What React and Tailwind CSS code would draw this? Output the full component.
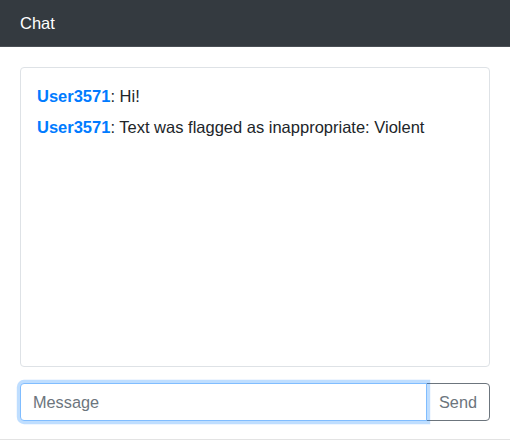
export default function App() {
  return (
    <div className="w-[510px] font-['Liberation_Sans',Arial,sans-serif] text-[16px] text-[#212529] bg-white">
      <div className="h-[47px] bg-[#343a40] border-b border-[#4a4f55] px-5 flex items-center text-white text-[16.5px] leading-6">
        Chat
      </div>
      <div className="px-5 pt-5 pb-[18px] border-b border-[#e3e3e3]">
        <div className="h-[300px] border border-[#dee2e6] rounded p-4 mb-4 leading-6 text-[16.5px]">
          <div className="mb-[7px]">
            <span className="font-bold text-[#007bff]">User3571</span>: Hi!
          </div>
          <div className="mb-[7px]">
            <span className="font-bold text-[#007bff]">User3571</span>: Text was flagged as inappropriate: Violent
          </div>
        </div>
        <div className="flex">
          <input
            autoFocus
            placeholder="Message"
            className="relative z-10 flex-1 min-w-0 h-[38px] px-3 text-[16.3px] border border-[#80bdff] rounded-l outline-none shadow-[0_0_0_3.2px_rgba(0,123,255,0.25)] placeholder:text-[#6c757d] text-[#495057] bg-white"
          />
          <button className="h-[38px] -ml-px px-3 border border-[#6c757d] rounded-r text-[#6c757d] text-[16.3px] bg-white leading-6">
            Send
          </button>
        </div>
      </div>
    </div>
  );
}
